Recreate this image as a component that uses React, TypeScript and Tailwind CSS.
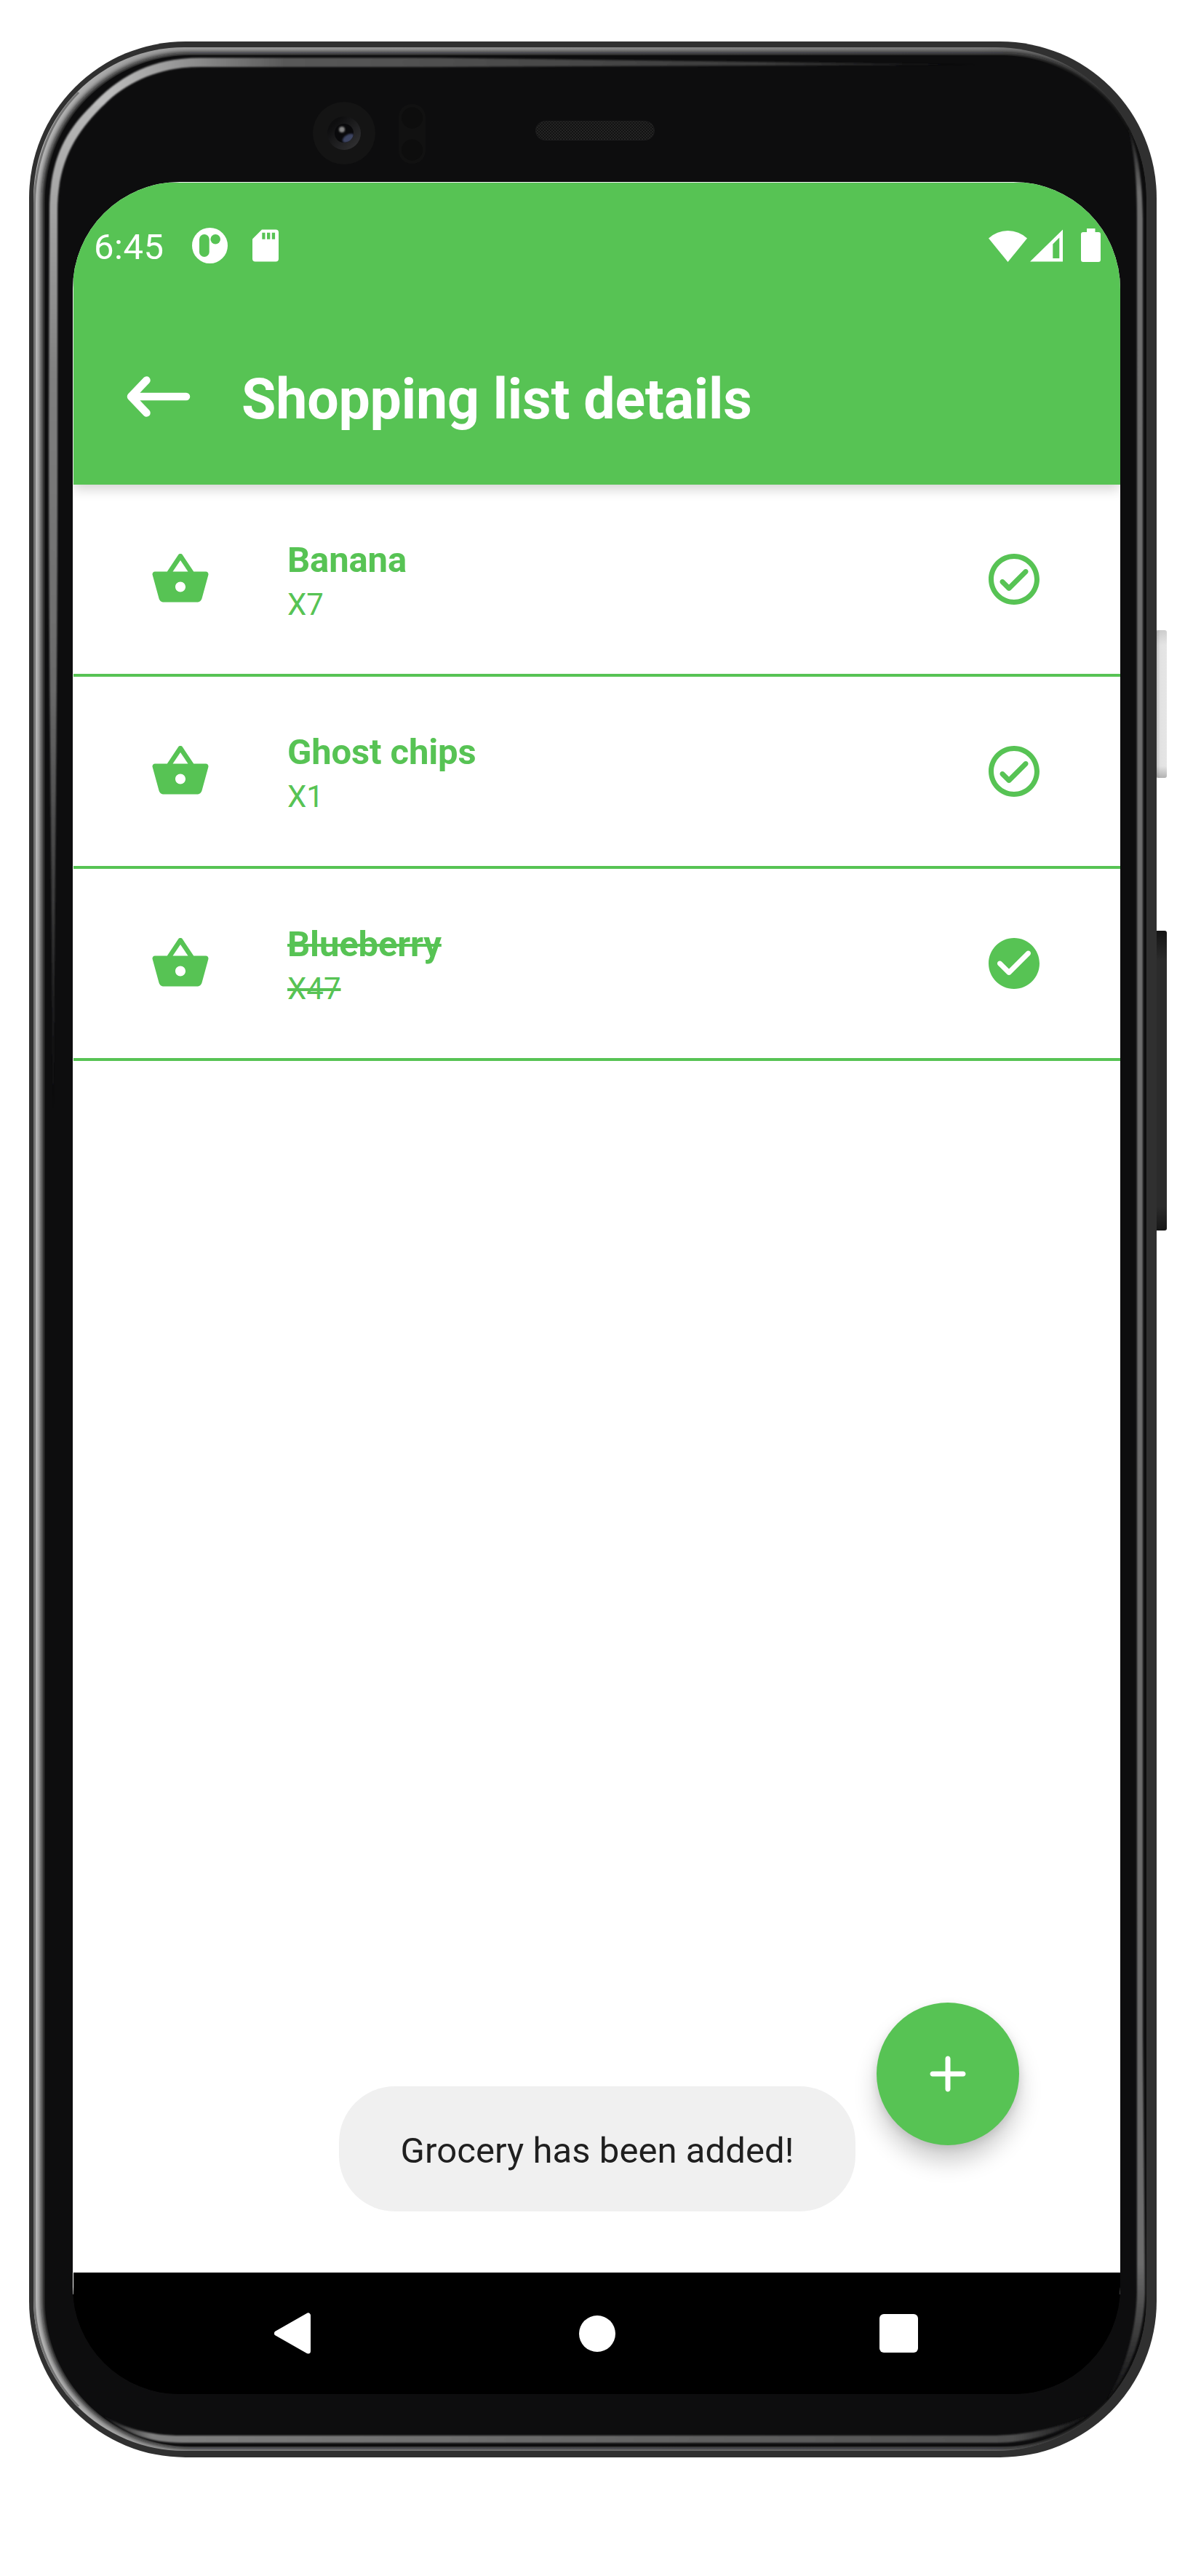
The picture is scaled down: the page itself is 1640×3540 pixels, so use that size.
import React from "react";

type Grocery = { name: string; amount: string; done: boolean };

const groceries: Grocery[] = [
  { name: "Banana", amount: "X7", done: false },
  { name: "Ghost chips", amount: "X1", done: false },
  { name: "Blueberry", amount: "X47", done: true },
];

function BasketIcon() {
  return (
    <svg viewBox="0 0 24 24" className="size-[84px] shrink-0 fill-current">
      <path d="M17.21 9l-4.38-6.56c-.19-.28-.51-.42-.83-.42-.32 0-.64.14-.83.43L6.79 9H2c-.55 0-1 .45-1 1 0 .09.01.18.04.27l2.54 9.27c.23.84 1 1.46 1.92 1.46h13c.92 0 1.69-.62 1.93-1.46l2.54-9.27L23 10c0-.55-.45-1-1-1h-4.79zM9 9l3-4.4L15 9H9zm3 8c-1.1 0-2-.9-2-2s.9-2 2-2 2 .9 2 2-.9 2-2 2z" />
    </svg>
  );
}

function CheckIcon({ filled }: { filled: boolean }) {
  return (
    <svg viewBox="0 0 24 24" className="size-[84px] shrink-0 fill-current">
      {filled ? (
        <path d="M12 2C6.48 2 2 6.48 2 12s4.48 10 10 10 10-4.48 10-10S17.52 2 12 2zM9.29 16.29L5.7 12.7c-.39-.39-.39-1.02 0-1.41.39-.39 1.02-.39 1.41 0L10 14.17l6.88-6.88c.39-.39 1.02-.39 1.41 0 .39.39.39 1.02 0 1.41l-7.59 7.59c-.38.39-1.02.39-1.41 0z" />
      ) : (
        <path d="M12 2C6.48 2 2 6.48 2 12s4.48 10 10 10 10-4.48 10-10S17.52 2 12 2zm0 18c-4.41 0-8-3.59-8-8s3.59-8 8-8 8 3.59 8 8-3.59 8-8 8zm3.88-11.71L10 14.17l-1.88-1.88c-.39-.39-1.02-.39-1.41 0-.39.39-.39 1.02 0 1.41l2.59 2.59c.39.39 1.02.39 1.41 0L17.3 9.7c.39-.39.39-1.02 0-1.41-.39-.39-1.03-.39-1.42 0z" />
      )}
    </svg>
  );
}

function PhoneBezel() {
  return (
    <svg viewBox="0 0 1640 3540" className="absolute inset-0 h-[3540px] w-[1640px]" aria-hidden="true">
      <defs>
        <linearGradient id="rim" x1="0" x2="1" y1="0" y2="0">
          <stop offset="0" stopColor="#b8b8b8" />
          <stop offset="0.1" stopColor="#a0a0a0" />
          <stop offset="0.85" stopColor="#7c7c7c" />
          <stop offset="1" stopColor="#5a5a5a" />
        </linearGradient>
        <linearGradient id="glossLeft" gradientUnits="userSpaceOnUse" x1="0" x2="0" y1="79" y2="1530">
          <stop offset="0" stopColor="#c0c0c0" />
          <stop offset="0.12" stopColor="#a8a8a8" />
          <stop offset="0.3" stopColor="#808080" />
          <stop offset="0.6" stopColor="#6a6a6a" />
          <stop offset="1" stopColor="#0d0d0e" />
        </linearGradient>
        <linearGradient id="glossTop" gradientUnits="userSpaceOnUse" x1="150" x2="1350" y1="0" y2="0">
          <stop offset="0" stopColor="#bcbcbc" />
          <stop offset="0.1" stopColor="#8c8c8c" />
          <stop offset="0.2" stopColor="#595959" />
          <stop offset="0.75" stopColor="#3c3c3c" />
          <stop offset="1" stopColor="#0d0d0e" />
        </linearGradient>
        <linearGradient id="glossBottom" gradientUnits="userSpaceOnUse" x1="140" x2="1500" y1="0" y2="0">
          <stop offset="0" stopColor="#0d0d0e" />
          <stop offset="0.05" stopColor="#808080" />
          <stop offset="0.2" stopColor="#777777" />
          <stop offset="0.92" stopColor="#505050" />
          <stop offset="1" stopColor="#0d0d0e" />
        </linearGradient>
        <linearGradient id="glossRight" gradientUnits="userSpaceOnUse" x1="0" x2="0" y1="170" y2="3300">
          <stop offset="0" stopColor="#0d0d0e" />
          <stop offset="0.03" stopColor="#6e6e6e" />
          <stop offset="0.94" stopColor="#6c6c6c" />
          <stop offset="1" stopColor="#0d0d0e" />
        </linearGradient>
        <linearGradient id="lens" x1="0" x2="1" y1="0" y2="1">
          <stop offset="0.2" stopColor="#0e0e0f" />
          <stop offset="1" stopColor="#353537" />
        </linearGradient>
        <linearGradient id="powerKey" x1="0" x2="1" y1="0" y2="0">
          <stop offset="0" stopColor="#b4b4b4" />
          <stop offset="0.3" stopColor="#cccccc" />
          <stop offset="0.5" stopColor="#e2e2e2" />
          <stop offset="1" stopColor="#e6e6e6" />
        </linearGradient>
        <linearGradient id="powerShade" x1="0" x2="0" y1="0" y2="1">
          <stop offset="0" stopColor="#000" stopOpacity="0.1" />
          <stop offset="0.1" stopColor="#000" stopOpacity="0" />
          <stop offset="0.92" stopColor="#000" stopOpacity="0" />
          <stop offset="1" stopColor="#000" stopOpacity="0.22" />
        </linearGradient>
        <linearGradient id="volumeKey" x1="0" x2="0" y1="0" y2="1">
          <stop offset="0" stopColor="#141414" />
          <stop offset="0.1" stopColor="#2b2b2b" />
          <stop offset="0.92" stopColor="#2b2b2b" />
          <stop offset="1" stopColor="#161616" />
        </linearGradient>
        <pattern id="mesh" width="4" height="4" patternUnits="userSpaceOnUse">
          <rect width="4" height="4" fill="#121212" />
          <rect width="2" height="2" fill="#242424" />
          <rect x="2" y="2" width="2" height="2" fill="#242424" />
        </pattern>
        <filter id="soft" filterUnits="userSpaceOnUse" x="0" y="0" width="1640" height="3540">
          <feGaussianBlur stdDeviation="3.6" />
        </filter>
        <filter id="edge" filterUnits="userSpaceOnUse" x="0" y="0" width="1640" height="3540">
          <feGaussianBlur stdDeviation="0.8" />
        </filter>
        <clipPath id="rimClip">
          <rect x="46" y="65" width="1530" height="3303" rx="207" />
        </clipPath>
        <clipPath id="lensClip">
          <circle cx="473" cy="183" r="13" />
        </clipPath>
      </defs>

      <rect x="1586" y="866" width="18" height="203" rx="3" fill="url(#powerKey)" />
      <rect x="1590" y="866" width="14" height="203" rx="3" fill="url(#powerShade)" />
      <rect x="1586" y="1279" width="18" height="412" rx="3" fill="url(#volumeKey)" />

      <rect x="40" y="57" width="1550" height="3320" rx="215" fill="#303030" />
      <g clipPath="url(#rimClip)">
        <rect x="46" y="65" width="1530" height="3303" fill="url(#rim)" />
        <rect x="57" y="72.5" width="1526" height="3292" rx="204" fill="#0d0d0e" filter="url(#soft)" />
        <rect x="62" y="76" width="1512" height="3286" rx="200" fill="#0d0d0e" />
      </g>
      <path d="M108 127C70 165 47.5 220 47.5 280V3160C47.5 3215 70 3269 108 3307" fill="none" stroke="#757575" strokeWidth="3" />

      <g filter="url(#edge)">
        <path d="M68 290C68 220 90 180 126 145L144 143C106 180 79 220 79 290V650C79 900 76 1200 73 1530C71 1200 67 900 67 600Z" fill="url(#glossLeft)" />
        <path d="M125 146C165 103 210 79.5 275 79.5H600L1350 89L600 92H275C220 92 175 112 143 144Z" fill="url(#glossTop)" />
        <path d="M140 3318C170 3337 205 3347 250 3347H1360C1410 3347 1455 3337 1500 3317C1455 3346 1410 3357 1370 3357H250C205 3357 170 3343 140 3318Z" fill="url(#glossBottom)" />
        <path d="M1550 172C1560 210 1563 250 1563 300V3150C1562 3205 1545 3260 1520 3300C1555 3260 1573 3205 1574 3150L1571 2800V300C1570 250 1566 210 1550 172Z" fill="url(#glossRight)" />
      </g>

      <circle cx="473" cy="183" r="43" fill="#141414" />
      <circle cx="473" cy="183" r="23" fill="url(#lens)" />
      <circle cx="473" cy="183" r="13" fill="#09090b" />
      <g clipPath="url(#lensClip)">
        <ellipse cx="479" cy="190" rx="9" ry="5" transform="rotate(-30 479 190)" fill="#3c4562" filter="url(#edge)" />
        <circle cx="470" cy="178" r="4" fill="#868686" filter="url(#edge)" />
      </g>
      <rect x="548" y="143" width="37" height="82" rx="18" fill="#111111" />
      <circle cx="566.5" cy="162" r="14.500" fill="#0d0d0d" />
      <circle cx="566.5" cy="206" r="14.500" fill="#0d0d0d" />
      <rect x="736.5" y="166.5" width="163" height="26" rx="13" fill="url(#mesh)" stroke="#1d1d1e" />
    </svg>
  );
}

function StatusBar() {
  return (
    <div className="flex h-[172px] items-center justify-between pr-[27px] pl-[28px]">
      <div className="flex items-center">
        <span className="w-[135px] pt-[4px] text-[49px] leading-[57px] tracking-[0.5px]">6:45</span>
        <svg viewBox="0 0 49 49" className="size-[49px]">
          <circle cx="24.5" cy="24.5" r="24.5" fill="#fff" />
          <rect x="10" y="9" width="13.7" height="31" rx="6.85" fill="#57c354" />
          <circle cx="32.2" cy="15.7" r="6.8" fill="#57c354" />
        </svg>
        <svg viewBox="0 0 36 45" className="ml-[34px] h-[45px] w-[36px]">
          <path d="M13 0.5H32a4 4 0 0 1 4 4V40.500a4 4 0 0 1-4 4H4a4 4 0 0 1-4-4V13.500Z" fill="#fff" />
          <path d="M13.300 4.800h4.200v9h-4.200zM20 4.800h4.300v9H20zM26.800 4.800h4.300v9h-4.300z" fill="#57c354" />
        </svg>
      </div>
      <div className="flex items-center">
        <svg viewBox="0 0 53 45" className="h-[45px] w-[53px]">
          <path d="M0 12.500A39 39 0 0 1 53 12.500L26.500 45Z" fill="#fff" />
        </svg>
        <svg viewBox="0 0 45 45" className="ml-[4px] size-[45px]">
          <path d="M45 0.500V44.500H0ZM40.300 11.500L31.300 20.500V40H40.300Z" fillRule="evenodd" fill="#fff" />
        </svg>
        <svg viewBox="0 0 27 46" className="ml-[25px] h-[46px] w-[27px]">
          <path d="M8 0H19.500V5H24a3 3 0 0 1 3 3V43a3 3 0 0 1-3 3H3a3 3 0 0 1-3-3V8a3 3 0 0 1 3-3H8Z" fill="#fff" />
        </svg>
      </div>
    </div>
  );
}

function GroceryRow({ item }: { item: Grocery }) {
  return (
    <li className="flex h-[264px] items-center border-b-4 border-[#57c354] pr-[104px] pl-[105px] text-[#57c354]">
      <BasketIcon />
      <div className={item.done ? "ml-[105px] flex-1 pt-[6px] line-through" : "ml-[105px] flex-1 pt-[6px]"}>
        <p className="text-[49px] leading-[63px] font-bold tracking-[-0.15px]">{item.name}</p>
        <p className="text-[42px] leading-[60px]">{item.amount}</p>
      </div>
      <CheckIcon filled={item.done} />
    </li>
  );
}

export default function App() {
  return (
    <div className="relative h-[3540px] w-[1640px] overflow-hidden bg-white pt-[250px] pl-[100px] font-['Roboto',sans-serif]">
      <PhoneBezel />
      <main className="relative flex h-[3040px] w-[1440px] flex-col overflow-hidden rounded-[147px] bg-[linear-gradient(to_bottom,#fff_2903px,#000_2903px)] pt-px pl-px">
        <header className="relative h-[415px] shrink-0 bg-[#57c354] text-white shadow-[0_6px_16px_rgba(0,0,0,0.18)]">
          <StatusBar />
          <div className="flex h-[243px] items-center pl-[73px]">
            <svg viewBox="0 0 88 56" className="h-[56px] w-[88px]" fill="none" stroke="#fff" strokeWidth="10.500" strokeLinecap="round" strokeLinejoin="round">
              <path d="M82 28H6M27.500 5.500L6 28L27.500 50.500" />
            </svg>
            <h1 className="ml-[70px] pt-[8px] text-[77px] leading-[90px] font-bold tracking-[-0.18px]">Shopping list details</h1>
          </div>
        </header>
        <ul className="flex-1 bg-white">
          {groceries.map((item) => (
            <GroceryRow key={item.name} item={item} />
          ))}
        </ul>
        <nav className="relative flex h-[167px] shrink-0 items-center bg-black pl-[276px]">
          <svg viewBox="0 0 50 57" className="h-[57px] w-[50px]">
            <path d="M3.500 28.500L46.500 4V53Z" fill="#fff" stroke="#fff" strokeWidth="7" strokeLinejoin="round" />
          </svg>
          <span className="ml-[369px] size-[50px] rounded-full bg-white" />
          <span className="ml-[363px] size-[53px] rounded-[6px] bg-white" />
        </nav>

        <button className="absolute top-[2502px] left-[1105px] flex size-[196px] items-center justify-center rounded-full bg-[#57c354] text-white shadow-[0_22px_32px_rgba(0,0,0,0.2),0_4px_12px_rgba(0,0,0,0.1)]">
          <svg viewBox="0 0 24 24" className="size-[84px] fill-current">
            <path d="M18 13h-5v5c0 .55-.45 1-1 1s-1-.45-1-1v-5H6c-.55 0-1-.45-1-1s.45-1 1-1h5V6c0-.55.45-1 1-1s1 .45 1 1v5h5c.55 0 1 .45 1 1s-.45 1-1 1z" />
          </svg>
        </button>
        <div className="absolute top-[2617px] left-[366px] flex h-[172px] w-[710px] items-center justify-center rounded-[77px] bg-[#f0f0f0]">
          <span className="pt-[5px] text-[49px] leading-[57px] tracking-[0.06px] whitespace-nowrap text-[#1f1f1f]">Grocery has been added!</span>
        </div>
      </main>
    </div>
  );
}
